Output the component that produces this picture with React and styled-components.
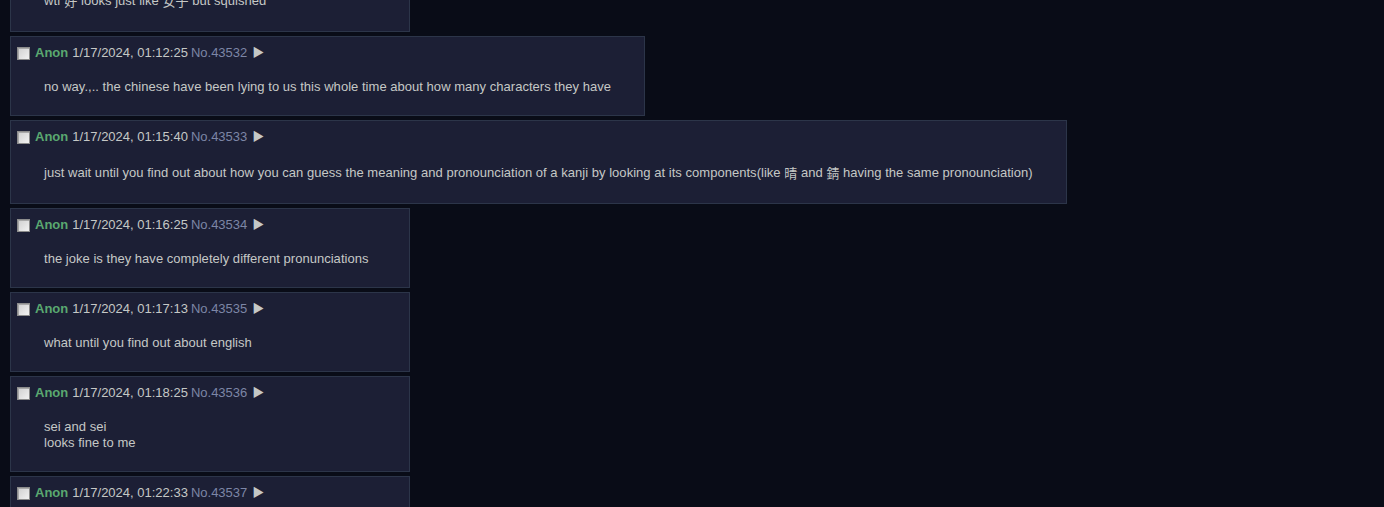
import React from "react";
import styled, { createGlobalStyle } from "styled-components";

const Global = createGlobalStyle`
  html, body {
    margin: 0;
    padding: 0;
    background: #090c17;
    overflow: hidden;
  }
  body {
    font-family: Arial, "Liberation Sans", "Noto Sans CJK JP", sans-serif;
    font-size: 13px;
    color: #c5c8c6;
  }
`;

const Thread = styled.div`
  display: flex;
  flex-direction: column;
  align-items: flex-start;
  gap: 4px;
  padding: 0 10px;
  margin-top: -52px;
`;

const Post = styled.div`
  box-sizing: border-box;
  min-width: 400px;
  background: #1c1f35;
  border: 1px solid #2c3549;
  padding: 8px 0 0 0;
`;

const Info = styled.div`
  display: flex;
  align-items: center;
  height: 16px;
  padding-left: 6px;
  white-space: nowrap;
  line-height: 16px;
`;

const Check = styled.input.attrs({ type: "checkbox" })`
  appearance: none;
  box-sizing: border-box;
  width: 13px;
  height: 13px;
  margin: 0 5px 0 0;
  border: 1px solid #8c8c8c;
  background: linear-gradient(135deg, #cfcfcf, #f2f2f2);
  box-shadow: inset 1px 1px 0 #a8a8a8;
`;

const Name = styled.span`
  color: #5aa870;
  font-weight: bold;
  margin-right: 4px;
`;

const DateTime = styled.span`
  color: #c5c8c6;
  margin-right: 3px;
`;

const Num = styled.span`
  color: #7d86a6;
  margin-right: 5px;
`;

const Arrow = styled.span`
  color: #c5c8c6;
  font-size: 12px;
  line-height: 16px;
`;

const Message = styled.div`
  margin: 18px 33px 20px 33px;
  line-height: 16px;
  letter-spacing: 0.03px;
  white-space: nowrap;
`;

const Kanji = styled.span`
  font-family: "Noto Sans CJK JP", sans-serif;
  line-height: 20px;
  vertical-align: -1px;
`;

const posts = [
  { date: "1/17/2024, 01:10:02", no: "43531", lines: [["wtf ", "好", " looks just like ", "女子", " but squished"]] },
  { date: "1/17/2024, 01:12:25", no: "43532", lines: [["no way.,.. the chinese have been lying to us this whole time about how many characters they have"]] },
  { date: "1/17/2024, 01:15:40", no: "43533", lines: [["just wait until you find out about how you can guess the meaning and pronounciation of a kanji by looking at its components(like ", "晴", " and ", "錆", " having the same pronounciation)"]] },
  { date: "1/17/2024, 01:16:25", no: "43534", lines: [["the joke is they have completely different pronunciations"]] },
  { date: "1/17/2024, 01:17:13", no: "43535", lines: [["what until you find out about english"]] },
  { date: "1/17/2024, 01:18:25", no: "43536", lines: [["sei and sei"], ["looks fine to me"]] },
  { date: "1/17/2024, 01:22:33", no: "43537", lines: [["they are read differently though"]] },
];

export default function App() {
  return (
    <>
      <Global />
      <Thread>
        {posts.map((p) => (
          <Post key={p.no}>
            <Info>
              <Check />
              <Name>Anon</Name>
              <DateTime>{p.date}</DateTime>
              <Num>No.{p.no}</Num>
              <Arrow>▶</Arrow>
            </Info>
            <Message>
              {p.lines.map((parts, i) => (
                <div key={i}>
                  {parts.map((t, j) => (j % 2 === 1 ? <Kanji key={j}>{t}</Kanji> : t))}
                </div>
              ))}
            </Message>
          </Post>
        ))}
      </Thread>
    </>
  );
}
